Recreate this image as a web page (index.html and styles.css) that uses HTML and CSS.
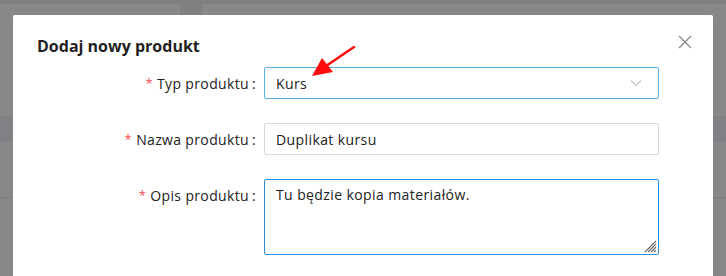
FILE: index.html
```html
<!DOCTYPE html>
<html lang="pl">
<head>
    <meta charset="UTF-8">
    <title>Dodaj nowy produkt</title>
    <link rel="stylesheet" href="styles.css">
</head>
<body>
    <!-- dimmed page behind the modal -->
    <div class="page">
        <div class="topline"></div>
        <div class="toolbar"><span class="tab"></span></div>
        <div class="spacer"></div>
        <div class="table-head"></div>
        <div class="table-body"></div>
        <div class="table-line"></div>
    </div>

    <div class="modal">
        <div class="modal-header">
            <h2>Dodaj nowy produkt</h2>
            <button class="close" aria-label="Zamknij">
                <svg width="14" height="14" viewBox="0 0 14 14"><path d="M1 1L13 13M13 1L1 13" stroke="#8c8c8c" stroke-width="1.4" fill="none"/></svg>
            </button>
        </div>

        <form class="product-form">
            <div class="form-row">
                <label class="label"><span class="req">*</span>Typ produktu<span class="colon">:</span></label>
                <div class="field select focused-light">
                    <span>Kurs</span>
                    <svg class="chevron" width="12" height="8" viewBox="0 0 12 8"><path d="M1 1.5L6 6.5L11 1.5" stroke="#c4c4c4" stroke-width="1.1" fill="none"/></svg>
                </div>
            </div>

            <div class="form-row">
                <label class="label"><span class="req">*</span>Nazwa produktu<span class="colon">:</span></label>
                <div class="field">Duplikat kursu</div>
            </div>

            <div class="form-row top">
                <label class="label"><span class="req">*</span>Opis produktu<span class="colon">:</span></label>
                <div class="field textarea focused">
                    Tu będzie kopia materiałów.
                    <svg class="grip" width="13" height="13" viewBox="0 0 13 13"><path d="M12 1L1 12M12 4L4 12M12 7L7 12M12 10L10 12" stroke="#6e6e6e" stroke-width="1.1" fill="none"/></svg>
                </div>
            </div>
        </form>
    </div>

    <!-- annotation arrow -->
    <svg class="arrow" width="60" height="40" viewBox="0 0 60 40">
        <path d="M50 2L22 21" stroke="#ff0a0a" stroke-width="2.6" stroke-linecap="round"/>
        <polygon points="8,31 18,13 29,27" fill="#ff0a0a"/>
    </svg>
</body>
</html>
```

FILE: styles.css
```css
/* General */
html {
    overflow: hidden;
}
body {
    margin: 0;
    font-family: 'Open Sans', sans-serif;
    background-color: #888888;
    width: 726px;
    height: 276px;
    overflow: hidden;
    position: relative;
}

/* Page behind the mask */
.page {
    display: flex;
    flex-direction: column;
}
.topline {
    height: 4px;
    background-color: #7e7f81;
}
.toolbar {
    height: 11px;
    padding-left: 180px;
}
.toolbar .tab {
    display: block;
    width: 22px;
    height: 11px;
    background-color: #7f8082;
}
.spacer {
    height: 101px;
}
.table-head {
    height: 26px;
    background-color: #808184;
}
.table-body {
    height: 55px;
}
.table-line {
    height: 1px;
    background-color: #7c7c7c;
}

/* Modal */
.modal {
    position: absolute;
    left: 13px;
    top: 15px;
    width: 700px;
    height: 261px;
    background: white;
    border-radius: 2px 2px 0 0;
    box-sizing: border-box;
    padding: 0 24px;
}
.modal-header {
    display: flex;
    align-items: center;
    justify-content: space-between;
    height: 62px;
    margin-bottom: -10px;
}
.modal-header h2 {
    margin: 0;
    font-size: 16px;
    font-weight: 700;
    color: #1f1f1f;
}
.close {
    background: none;
    border: none;
    padding: 0;
    margin-right: -3px;
    margin-top: -6px;
    cursor: pointer;
}

/* Form */
.product-form {
    display: flex;
    flex-direction: column;
    gap: 24px;
}
.form-row {
    display: flex;
    align-items: center;
}
.form-row.top {
    align-items: flex-start;
}
.form-row.top .label {
    height: 32px;
}
.label {
    width: 219px;
    display: flex;
    align-items: center;
    justify-content: flex-end;
    font-size: 14px;
    letter-spacing: 0.35px;
    color: #222;
    margin-right: 8px;
}
.req {
    color: #ff4d4f;
    font-size: 13px;
    margin-right: 4px;
}
.colon {
    margin-left: 3px;
}
.field {
    width: 395px;
    height: 32px;
    box-sizing: border-box;
    border: 1px solid #d9d9d9;
    border-radius: 2px;
    padding: 0 11px;
    display: flex;
    align-items: center;
    font-size: 14px;
    letter-spacing: 0.4px;
    color: #222;
}
.select {
    justify-content: space-between;
}
.chevron {
    margin-right: 5px;
}
.focused-light {
    border-color: #5aafe6;
}
.focused {
    border-color: #2b8fe0;
}
.textarea {
    height: 76px;
    align-items: flex-start;
    padding-top: 5px;
    position: relative;
}
.grip {
    position: absolute;
    right: 1px;
    bottom: 1px;
}

/* Annotation */
.arrow {
    position: absolute;
    left: 304px;
    top: 45px;
}
```
